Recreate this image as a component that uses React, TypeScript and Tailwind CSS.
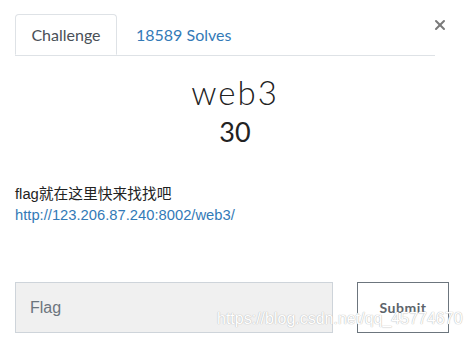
import { X } from 'lucide-react';

export default function App() {
  return (
    <div className="relative w-[470px] h-[348px] bg-white font-['Lato','Noto_Sans_CJK_SC',sans-serif] text-[#212529]">
      {/* Close */}
      <button className="absolute right-[22px] top-[17px] text-[#7a7a7a]">
        <X size={16} strokeWidth={3} />
      </button>

      {/* Tabs */}
      <div className="pt-[14px] px-[15px]">
        <div className="flex w-[420px] border-b border-[#dee2e6]">
          <div className="-mb-px w-[102px] h-[41px] flex items-center justify-center border border-[#dee2e6] border-b-white rounded-t-[4px] bg-white text-[16px] text-[#495057]">
            Challenge
          </div>
          <div className="h-[41px] flex items-center px-[19px] text-[16px] text-[#337ab7]">
            18589 Solves
          </div>
        </div>
      </div>

      {/* Title */}
      <div className="flex flex-col items-center mt-[17px]">
        <div className="text-[33px] leading-[38px] font-light tracking-[2px] text-[#222]">web3</div>
        <div className="text-[27px] leading-[34px] text-[#222] mt-[4px]">30</div>
      </div>

      {/* Description */}
      <div className="px-[15px] mt-[35px] text-[14.75px] leading-[20px]">
        <p className="font-['Liberation_Sans','Noto_Sans_CJK_SC',sans-serif] text-[#222]">flag就在这里快来找找吧</p>
        <a className="font-['Liberation_Sans',sans-serif] text-[#337ab7]" href="#">
          http://123.206.87.240:8002/web3/
        </a>
      </div>

      {/* Form */}
      <div className="flex items-center px-[15px] mt-[57px] gap-[24px]">
        <div className="w-[318px] h-[51px] bg-[#f0f0f0] border border-[#ced4da] flex items-center px-[14px] text-[16px] text-[#6c757d] font-['Liberation_Sans',sans-serif]">
          Flag
        </div>
        <button className="w-[92px] h-[51px] border border-[#6c757d] bg-white text-[14px] font-bold tracking-[0.5px] text-[#5c636a]">
          Submit
        </button>
      </div>

      {/* Watermark */}
      <div className="absolute left-[217px] top-[307px] text-[16px] text-white font-['Liberation_Sans',sans-serif] [text-shadow:0_0_1px_#bbb,0_0_1px_#bbb]">
        https://blog.csdn.net/qq_45774670
      </div>
    </div>
  );
}
